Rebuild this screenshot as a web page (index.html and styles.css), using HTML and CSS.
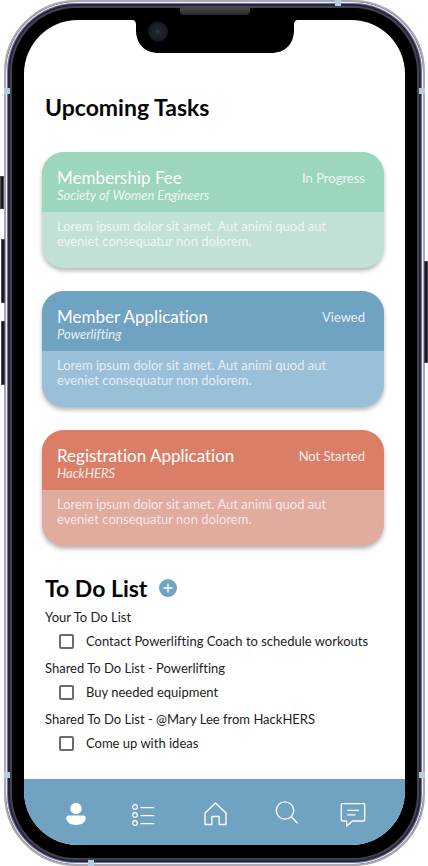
FILE: index.html
```html
<!DOCTYPE html>
<html lang="en">
<head>
<meta charset="utf-8">
<meta name="viewport" content="width=device-width, initial-scale=1">
<title>Upcoming Tasks</title>
<link rel="stylesheet" href="styles.css">
</head>
<body>
<div class="phone">
  <span class="key key-mute"></span>
  <span class="key key-up"></span>
  <span class="key key-down"></span>
  <span class="key key-power"></span>
  <span class="band band-left band-high"></span>
  <span class="band band-left band-low"></span>
  <span class="band band-right band-high"></span>
  <span class="band band-right band-low"></span>
  <span class="band band-top"></span>
  <span class="band band-bottom"></span>
  <span class="speaker"></span>
  <div class="screen">
    <div class="notch">
      <svg width="166" height="33" viewBox="0 0 166 33" aria-hidden="true">
        <defs><radialGradient id="lens"><stop offset="0" stop-color="#232a30"/><stop offset="1" stop-color="#14191e"/></radialGradient></defs>
        <path d="M0 0 Q4 0 4 5 V10 C4 24 13 33 27 33 H139 C153 33 162 24 162 10 V5 Q162 0 166 0 Z" fill="#000"/>
        <circle cx="26" cy="11.500" r="10" fill="url(#lens)"/>
        <circle cx="26" cy="11.500" r="1.500" fill="#30373d"/>
      </svg>
    </div>
    <main class="content">
      <h1 class="heading">Upcoming Tasks</h1>
      <section class="cards" aria-label="Upcoming tasks">
        <article class="card green">
          <header class="card-head">
            <div><h2>Membership Fee</h2><p class="club">Society of Women Engineers</p></div>
            <span class="status">In Progress</span>
          </header>
          <p class="card-body">Lorem ipsum dolor sit amet. Aut animi quod aut<br>eveniet consequatur non dolorem.</p>
        </article>
        <article class="card blue">
          <header class="card-head">
            <div><h2>Member Application</h2><p class="club">Powerlifting</p></div>
            <span class="status">Viewed</span>
          </header>
          <p class="card-body">Lorem ipsum dolor sit amet. Aut animi quod aut<br>eveniet consequatur non dolorem.</p>
        </article>
        <article class="card red">
          <header class="card-head">
            <div><h2>Registration Application</h2><p class="club">HackHERS</p></div>
            <span class="status">Not Started</span>
          </header>
          <p class="card-body">Lorem ipsum dolor sit amet. Aut animi quod aut<br>eveniet consequatur non dolorem.</p>
        </article>
      </section>
      <section class="todo">
        <div class="todo-head">
          <h1 class="heading">To Do List</h1>
          <button class="add" type="button" aria-label="Add item">
            <svg width="18" height="18" viewBox="0 0 18 18"><path d="M9 4.500V13.500M4.500 9H13.500" stroke="#fff" stroke-width="1.300"/></svg>
          </button>
        </div>
        <h3>Your To Do List</h3>
        <label class="item"><input type="checkbox">Contact Powerlifting Coach to schedule workouts</label>
        <h3>Shared To Do List - Powerlifting</h3>
        <label class="item"><input type="checkbox">Buy needed equipment</label>
        <h3>Shared To Do List - @Mary Lee from HackHERS</h3>
        <label class="item"><input type="checkbox">Come up with ideas</label>
      </section>
    </main>
    <nav class="tabs" aria-label="Main">
      <a href="#profile" aria-label="Profile">
        <svg width="28" height="28" viewBox="0 0 28 28"><circle cx="14" cy="8.500" r="5.700" fill="#fff"/><path d="M7.200 15.400H20.800Q23.700 15.400 23.700 18.300C23.700 22.600 19 25 14 25S4.300 22.600 4.300 18.300Q4.300 15.400 7.200 15.400Z" fill="#fff"/></svg>
      </a>
      <a href="#tasks" aria-label="Tasks">
        <svg width="28" height="28" viewBox="0 0 28 28" fill="none" stroke="#fff" stroke-width="1.200"><circle cx="4" cy="7" r="2.300"/><circle cx="4" cy="15" r="2.300"/><circle cx="4" cy="23" r="2.300"/><path d="M9.500 7.600H23M9.500 15.600H23M9.500 23.600H23"/></svg>
      </a>
      <a href="#home" aria-label="Home">
        <svg width="28" height="28" viewBox="0 0 28 28" fill="none" stroke="#fff" stroke-width="1.300" stroke-linejoin="round"><path d="M4 24.500V13L14.500 3L25 13V24.500H18.100V16.500H10.900V24.500Z"/></svg>
      </a>
      <a href="#search" aria-label="Search">
        <svg width="28" height="28" viewBox="0 0 28 28" fill="none" stroke="#fff" stroke-width="1.300" stroke-linecap="round"><circle cx="15" cy="10.500" r="8.700"/><path d="M21.300 16.800L27.300 23"/></svg>
      </a>
      <a href="#messages" aria-label="Messages">
        <svg width="28" height="28" viewBox="0 0 28 28" fill="none" stroke="#fff" stroke-width="1.300" stroke-linejoin="round"><path d="M3.500 3.600H24.500Q25.700 3.600 25.700 4.800V19.800Q25.700 21 24.500 21H13.500L7.700 26V21H3.500Q2.300 21 2.300 19.800V4.800Q2.300 3.600 3.500 3.600Z"/><path d="M8.300 10.400H20M8.300 14.900H16.500"/></svg>
      </a>
    </nav>
  </div>
</div>
</body>
</html>
```
FILE: styles.css
```css
* {
  box-sizing: border-box;
}

body,
h1,
h2,
h3,
p {
  margin: 0;
}

body {
  min-height: 100vh;
  display: flex;
  background: #fff;
  color: #111;
  font-family: Lato, "Open Sans", sans-serif;
  font-size: 13px;
  font-variant-ligatures: none;
}

/* Device frame */
.phone {
  position: relative;
  flex: 1;
  display: flex;
  margin: 0 3px 0 4px;
  padding: 18px 18px 19px;
  border: 2px solid #aaa8b4;
  border-radius: 72px;
  background: #000;
  box-shadow: inset 0 0 0 1px #efeff5, inset 0 0 0 2px #77778c, inset 0 0 0 4px #25254a, inset 0 0 0 6px #41444c;
}

.key {
  position: absolute;
  width: 4px;
  background: #17191f;
  border: 1px solid #4a4a56;
}

.key-mute { left: -6px; top: 174px; height: 33px; }
.key-up { left: -5px; top: 237px; height: 64px; }
.key-down { left: -5px; top: 319px; height: 64px; }
.key-power { right: -5px; top: 259px; height: 102px; }

.band {
  position: absolute;
  width: 6px;
  height: 6px;
  background: #b5cde0;
}

.band-left { left: -2px; }
.band-right { right: -2px; }
.band-high { top: 86px; }
.band-low { bottom: 86px; }
.band-top { top: -2px; right: 82px; }
.band-bottom { bottom: -2px; left: 82px; }

.speaker {
  position: absolute;
  top: 5px;
  left: 50%;
  width: 70px;
  height: 8px;
  margin-left: -35px;
  border-radius: 0 0 4px 4px;
  background: linear-gradient(#4a4a4a, #262829);
}

.screen {
  flex: 1;
  display: flex;
  flex-direction: column;
  overflow: hidden;
  border-radius: 54px;
  background: #fff;
}

.notch {
  display: flex;
  justify-content: center;
}

.notch svg,
.tabs svg,
.add svg {
  display: block;
}

.content {
  flex: 1;
  padding: 40px 21px 0 18px;
}

.heading {
  padding-left: 3px;
  font-size: 23px;
  line-height: 28px;
  font-weight: 700;
  color: #050505;
}

/* Task cards */
.cards {
  display: grid;
  gap: 23px;
  margin-top: 31px;
}

.card {
  overflow: hidden;
  border-radius: 22px;
  color: #fff;
  box-shadow: 0 3px 4px rgba(0, 0, 0, 0.28);
}

.card-head {
  display: flex;
  justify-content: space-between;
  height: 60px;
  padding: 16px 19px 0 15px;
}

.card h2 {
  font-size: 17px;
  line-height: 20px;
  font-weight: 400;
}

.club {
  font-size: 13px;
  line-height: 15px;
  font-style: italic;
  opacity: 0.85;
}

.status {
  font-size: 13px;
  line-height: 20px;
  opacity: 0.85;
}

.card-body {
  height: 56px;
  padding: 7px 15px;
  font-size: 13px;
  line-height: 15px;
  color: rgba(255, 255, 255, 0.75);
}

.green { background: #c1e1d4; }
.green .card-head { background: #9cd6bd; }
.blue { background: #99bfd9; }
.blue .card-head { background: #70a2c2; }
.red { background: #e1ab9e; }
.red .card-head { background: #da7e68; }

/* To do list */
.todo {
  margin-top: 28px;
}

.todo-head {
  display: flex;
  align-items: center;
  gap: 12px;
  margin-bottom: 7px;
}

.add {
  width: 18px;
  height: 18px;
  padding: 0;
  border: 0;
  border-radius: 50%;
  background: #70a2c2;
}

.todo h3 {
  padding-left: 3px;
  font-size: 13px;
  line-height: 16px;
  font-weight: 400;
  color: #222;
}

.item {
  display: flex;
  align-items: center;
  gap: 12px;
  padding-left: 17px;
  margin: 8px 0 11px;
  line-height: 16px;
  color: #222;
}

.item input {
  appearance: none;
  flex: none;
  width: 15px;
  height: 15px;
  margin: 0;
  border: 2px solid #6b6b6b;
  border-radius: 2px;
  background: #fff;
}

/* Bottom navigation */
.tabs {
  display: flex;
  justify-content: space-between;
  height: 66px;
  padding: 21px 38px 0;
  background: #70a2c2;
}
```
